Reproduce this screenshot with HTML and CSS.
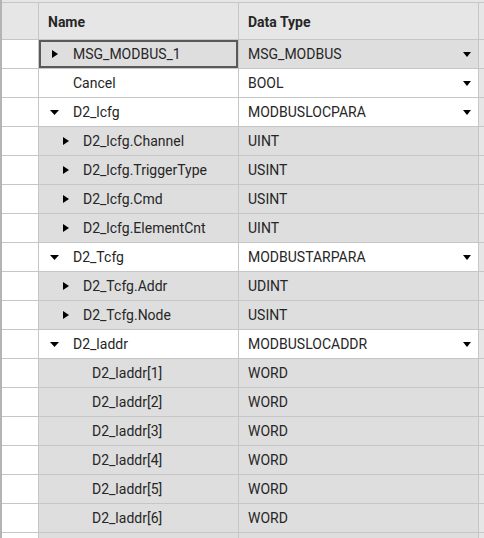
FILE: index.html
```html
<!DOCTYPE html>
<html>
<head>
<meta charset="utf-8">
<link rel="stylesheet" href="styles.css">
</head>
<body>
<div class="grid">
  <div class="topstrip"></div>
  <div class="row head">
    <div class="c idx"></div>
    <div class="c name">Name</div>
    <div class="c type">Data Type</div>
    <div class="c tail"></div>
  </div>

  <div class="row gray sel">
    <div class="c idx"></div>
    <div class="c name l0"><svg class="tg" width="10" height="10" viewBox="0 0 10 10"><polygon points="2,1 8,5 2,9"/></svg><span>MSG_MODBUS_1</span></div>
    <div class="c type"><span>MSG_MODBUS</span><svg class="dd" width="8" height="5" viewBox="0 0 8 5"><polygon points="0,0 8,0 4,5"/></svg></div>
    <div class="c tail"></div>
  </div>

  <div class="row">
    <div class="c idx"></div>
    <div class="c name l0"><span class="tg-empty"></span><span>Cancel</span></div>
    <div class="c type"><span>BOOL</span><svg class="dd" width="8" height="5" viewBox="0 0 8 5"><polygon points="0,0 8,0 4,5"/></svg></div>
    <div class="c tail"></div>
  </div>

  <div class="row">
    <div class="c idx"></div>
    <div class="c name l0"><svg class="tg" width="10" height="10" viewBox="0 0 10 10"><polygon points="0,3 9,3 4.5,8"/></svg><span>D2_lcfg</span></div>
    <div class="c type"><span>MODBUSLOCPARA</span><svg class="dd" width="8" height="5" viewBox="0 0 8 5"><polygon points="0,0 8,0 4,5"/></svg></div>
    <div class="c tail"></div>
  </div>

  <div class="row gray">
    <div class="c idx"></div>
    <div class="c name l1"><svg class="tg" width="10" height="10" viewBox="0 0 10 10"><polygon points="2,1 8,5 2,9"/></svg><span>D2_lcfg.Channel</span></div>
    <div class="c type"><span>UINT</span></div>
    <div class="c tail"></div>
  </div>
  <div class="row gray">
    <div class="c idx"></div>
    <div class="c name l1"><svg class="tg" width="10" height="10" viewBox="0 0 10 10"><polygon points="2,1 8,5 2,9"/></svg><span>D2_lcfg.TriggerType</span></div>
    <div class="c type"><span>USINT</span></div>
    <div class="c tail"></div>
  </div>
  <div class="row gray">
    <div class="c idx"></div>
    <div class="c name l1"><svg class="tg" width="10" height="10" viewBox="0 0 10 10"><polygon points="2,1 8,5 2,9"/></svg><span>D2_lcfg.Cmd</span></div>
    <div class="c type"><span>USINT</span></div>
    <div class="c tail"></div>
  </div>
  <div class="row gray">
    <div class="c idx"></div>
    <div class="c name l1"><svg class="tg" width="10" height="10" viewBox="0 0 10 10"><polygon points="2,1 8,5 2,9"/></svg><span>D2_lcfg.ElementCnt</span></div>
    <div class="c type"><span>UINT</span></div>
    <div class="c tail"></div>
  </div>

  <div class="row">
    <div class="c idx"></div>
    <div class="c name l0"><svg class="tg" width="10" height="10" viewBox="0 0 10 10"><polygon points="0,3 9,3 4.5,8"/></svg><span>D2_Tcfg</span></div>
    <div class="c type"><span>MODBUSTARPARA</span><svg class="dd" width="8" height="5" viewBox="0 0 8 5"><polygon points="0,0 8,0 4,5"/></svg></div>
    <div class="c tail"></div>
  </div>
  <div class="row gray">
    <div class="c idx"></div>
    <div class="c name l1"><svg class="tg" width="10" height="10" viewBox="0 0 10 10"><polygon points="2,1 8,5 2,9"/></svg><span>D2_Tcfg.Addr</span></div>
    <div class="c type"><span>UDINT</span></div>
    <div class="c tail"></div>
  </div>
  <div class="row gray">
    <div class="c idx"></div>
    <div class="c name l1"><svg class="tg" width="10" height="10" viewBox="0 0 10 10"><polygon points="2,1 8,5 2,9"/></svg><span>D2_Tcfg.Node</span></div>
    <div class="c type"><span>USINT</span></div>
    <div class="c tail"></div>
  </div>

  <div class="row">
    <div class="c idx"></div>
    <div class="c name l0"><svg class="tg" width="10" height="10" viewBox="0 0 10 10"><polygon points="0,3 9,3 4.5,8"/></svg><span>D2_laddr</span></div>
    <div class="c type"><span>MODBUSLOCADDR</span><svg class="dd" width="8" height="5" viewBox="0 0 8 5"><polygon points="0,0 8,0 4,5"/></svg></div>
    <div class="c tail"></div>
  </div>
  <div class="row gray">
    <div class="c idx"></div>
    <div class="c name leaf"><span>D2_laddr[1]</span></div>
    <div class="c type"><span>WORD</span></div>
    <div class="c tail"></div>
  </div>
  <div class="row gray">
    <div class="c idx"></div>
    <div class="c name leaf"><span>D2_laddr[2]</span></div>
    <div class="c type"><span>WORD</span></div>
    <div class="c tail"></div>
  </div>
  <div class="row gray">
    <div class="c idx"></div>
    <div class="c name leaf"><span>D2_laddr[3]</span></div>
    <div class="c type"><span>WORD</span></div>
    <div class="c tail"></div>
  </div>
  <div class="row gray">
    <div class="c idx"></div>
    <div class="c name leaf"><span>D2_laddr[4]</span></div>
    <div class="c type"><span>WORD</span></div>
    <div class="c tail"></div>
  </div>
  <div class="row gray">
    <div class="c idx"></div>
    <div class="c name leaf"><span>D2_laddr[5]</span></div>
    <div class="c type"><span>WORD</span></div>
    <div class="c tail"></div>
  </div>
  <div class="row gray">
    <div class="c idx"></div>
    <div class="c name leaf"><span>D2_laddr[6]</span></div>
    <div class="c type"><span>WORD</span></div>
    <div class="c tail"></div>
  </div>
  <div class="row gray">
    <div class="c idx"></div>
    <div class="c name leaf"><span></span></div>
    <div class="c type"><span></span></div>
    <div class="c tail"></div>
  </div>
</div>
</body>
</html>
```

FILE: styles.css
```css
html, body {
  margin: 0;
  padding: 0;
  background: #ffffff;
  overflow: hidden;
}
body {
  font-family: Roboto, "Liberation Sans", sans-serif;
  font-size: 14px;
  color: #262626;
  width: 484px;
  height: 538px;
}
.grid {
  border-left: 2px solid #b4b4b4;
  box-sizing: border-box;
  width: 484px;
}
.topstrip {
  height: 2px;
  background: #e6e6e6;
  border-bottom: 1px solid #c6c6c6;
}
.row {
  display: flex;
  height: 29px;
}
.row.head {
  height: 37px;
  background: #e6e6e6;
  font-weight: bold;
}
.c {
  box-sizing: border-box;
  border-right: 1px solid #c6c6c6;
  border-bottom: 1px solid #c6c6c6;
  display: flex;
  align-items: center;
  white-space: nowrap;
}
.idx { width: 37px; }
.name { width: 200px; padding-left: 9px; }
.type {
  width: 240px;
  padding-left: 9px;
  padding-right: 7px;
  justify-content: space-between;
}
.tail {
  width: 5px;
  background: #e6e6e6;
  border-right: none;
}
.head .c { padding-top: 2px; }
.gray .name, .gray .type { background: #dedede; }
.sel .name { box-shadow: inset 0 0 0 2px #5a5a5a; }
.name.l0 { padding-left: 11px; }
.name.l0 .tg, .name.l0 .tg-empty { margin-right: 13px; }
.name.l1 { padding-left: 22px; }
.name.l1 .tg { margin-right: 12px; }
.name.leaf { padding-left: 53px; }
.tg { flex: none; fill: #000000; }
.tg-empty { display: inline-block; width: 10px; height: 10px; flex: none; }
.dd { flex: none; fill: #000000; }
```
